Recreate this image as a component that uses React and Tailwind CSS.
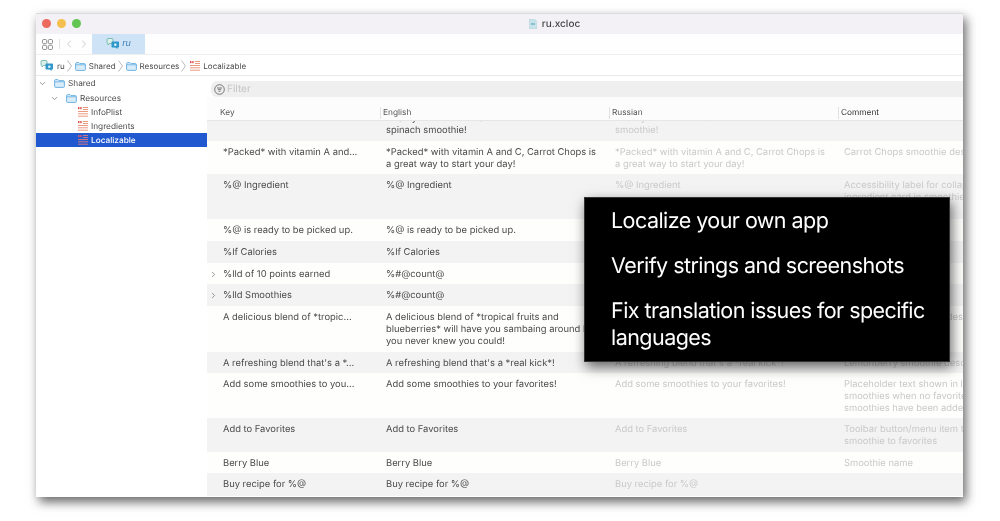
import React from 'react';
import { ChevronDown, ChevronRight, ChevronLeft } from 'lucide-react';

const rows = [
    { h: 'h-[20px]', key: '', en: ['A tasty blend of fruit and', 'spinach smoothie!'], ru: ['A tasty blend of fruit and', 'smoothie!'], note: [''], clipped: true },
    { h: 'h-[33px]', key: '*Packed* with vitamin A and...', en: ['*Packed* with vitamin A and C, Carrot Chops is', 'a great way to start your day!'], ru: ['*Packed* with vitamin A and C, Carrot Chops is', 'a great way to start your day!'], note: ['Carrot Chops smoothie description'] },
    { h: 'h-[45px]', key: '%@ Ingredient', en: ['%@ Ingredient'], ru: ['%@ Ingredient'], note: ['Accessibility label for collapsed', 'ingredient card in smoothie maker'] },
    { h: 'h-[22px]', key: '%@ is ready to be picked up.', en: ['%@ is ready to be picked up.'], ru: ['%@ is ready to be picked up.'], note: ['Order status'] },
    { h: 'h-[22px]', key: '%lf Calories', en: ['%lf Calories'], ru: ['%lf Calories'], note: ['Nutrition label'] },
    { h: 'h-[21px]', key: '%lld of 10 points earned', en: ['%#@count@'], ru: ['%#@count@'], note: ['Points earned'], more: true },
    { h: 'h-[22px]', key: '%lld Smoothies', en: ['%#@count@'], ru: ['%#@count@'], note: ['Smoothie count'], more: true },
    { h: 'h-[46px]', key: 'A delicious blend of *tropic...', en: ['A delicious blend of *tropical fruits and', 'blueberries* will have you sambaing around like', 'you never knew you could!'], ru: ['A delicious blend of *tropical fruits'], note: ['Bananaberry smoothie description das'] },
    { h: 'h-[21px]', key: "A refreshing blend that's a *...", en: ["A refreshing blend that's a *real kick*!"], ru: ["A refreshing blend that's a *real kick*!"], note: ['Lemonberry smoothie description'] },
    { h: 'h-[45px]', key: 'Add some smoothies to you...', en: ['Add some smoothies to your favorites!'], ru: ['Add some smoothies to your favorites!'], note: ['Placeholder text shown in list of', 'smoothies when no favorite', 'smoothies have been added'] },
    { h: 'h-[34px]', key: 'Add to Favorites', en: ['Add to Favorites'], ru: ['Add to Favorites'], note: ['Toolbar button/menu item to add', 'smoothie to favorites'] },
    { h: 'h-[21px]', key: 'Berry Blue', en: ['Berry Blue'], ru: ['Berry Blue'], note: ['Smoothie name'] },
    { h: 'h-[23px]', key: 'Buy recipe for %@', en: ['Buy recipe for %@'], ru: ['Buy recipe for %@'], note: [''] }
];

const Lines = ({ items, clipped }) => (
    <div className={clipped ? '-mt-[14px]' : ''}>
        {items.map((line, i) => <div key={i} className="whitespace-nowrap">{line}</div>)}
    </div>
);

const Folder = () => (
    <svg width="11" height="9" viewBox="0 0 11 9" fill="none" className="shrink-0">
        <path d="M.6 1.6c0-.6.4-1 1-1h2.3l1 1h4.500c.6 0 1 .4 1 1v4.800c0 .6-.4 1-1 1H1.600c-.6 0-1-.4-1-1z" fill="#d8ecfa" stroke="#62ace0" strokeWidth=".9" />
        <path d="M.8 2.800h9.400" stroke="#62ace0" strokeWidth=".8" />
    </svg>
);

const Strings = ({ dim }) => (
    <svg width="10" height="10" viewBox="0 0 10 10" className="shrink-0">
        <g fill={dim ? '#d9576a' : '#e2574c'}>
            <rect x="0" y="0" width="1.500" height="2.200" />
            <rect x="2.200" y="0" width="1.500" height="2.200" />
        </g>
        <g stroke={dim ? '#c9788a' : '#eb9a80'} strokeWidth="1">
            <path d="M5 .5h5M5 2.500h5M0 4.500h10M0 6.800h10M0 9.200h10" />
        </g>
    </svg>
);

const Translate = () => (
    <svg width="14" height="12" viewBox="0 0 14 12" fill="none" className="shrink-0">
        <path d="M1 1.500c0-.6.4-1 1-1h4c.6 0 1 .4 1 1v3c0 .6-.4 1-1 1H3.500L2 7V5.500c-.6 0-1-.4-1-1z" fill="#dcefe9" stroke="#6fb5ac" strokeWidth=".9" />
        <path d="M5.500 4.500c0-.6.4-1 1-1h5.500c.6 0 1 .4 1 1v4c0 .6-.4 1-1 1h-.5V11L9.500 9.500h-3c-.6 0-1-.4-1-1z" fill="#2f97c9" />
        <rect x="8" y="5.500" width="2.600" height="2.400" rx=".8" fill="#d5eef8" />
    </svg>
);

const Crumb = () => (
    <svg width="5" height="12" viewBox="0 0 5 12" fill="none" className="shrink-0">
        <path d="M.5.5 4.500 6 .5 11.500" stroke="#aaaaaa" strokeWidth=".8" />
    </svg>
);

const GridIcon = () => (
    <svg width="11" height="11" viewBox="0 0 11 11" fill="none" stroke="#808080" strokeWidth=".9">
        <rect x=".5" y=".5" width="4.200" height="4.200" rx="1.200" />
        <rect x="6.300" y=".5" width="4.200" height="4.200" rx="1.200" />
        <rect x=".5" y="6.300" width="4.200" height="4.200" rx="1.200" />
        <rect x="6.300" y="6.300" width="4.200" height="4.200" rx="1.200" />
    </svg>
);

const Sidebar = () => (
    <div className="w-[171px] shrink-0 bg-white text-[8.250px] text-[#4a4a4a]">
        <div className="h-[15px] flex items-center pl-[2px]">
            <ChevronDown size={9} className="text-[#777] shrink-0" />
            <span className="ml-[7px]"><Folder /></span>
            <span className="ml-[3px]">Shared</span>
        </div>
        <div className="h-[14px] flex items-center pl-[14px]">
            <ChevronDown size={9} className="text-[#777] shrink-0" />
            <span className="ml-[7px]"><Folder /></span>
            <span className="ml-[3px]">Resources</span>
        </div>
        <div className="h-[14px] flex items-center pl-[42px] gap-[3px]"><Strings />InfoPlist</div>
        <div className="h-[14px] flex items-center pl-[42px] gap-[3px]"><Strings />Ingredients</div>
        <div className="h-[14px] flex items-center pl-[42px] gap-[3px] bg-[#2058cf] text-white font-medium"><Strings dim />Localizable</div>
    </div>
);

const Table = () => (
    <div className="flex-1 min-w-0 flex flex-col overflow-hidden">
        <div className="h-[21px] shrink-0 pl-1 pt-[5px] bg-white">
            <div className="h-[16px] bg-[#eeefee] rounded-l-md flex items-center pl-[3px] gap-[2px] text-[10px] text-[#c4c4c4]">
                <svg width="11" height="11" viewBox="0 0 11 11" fill="none" stroke="#555" strokeWidth=".8">
                    <circle cx="5.500" cy="5.500" r="4.800" />
                    <path d="M3 4h5M3.800 5.700h3.400M4.700 7.400h1.600" />
                </svg>
                Filter
            </div>
        </div>
        <div className="h-[24px] shrink-0 grid grid-cols-[173px_229px_229px_229px] bg-[#fcfcfc] border-b border-[#e6e6e6] text-[8.300px] text-[#555]">
            <div className="flex items-center pl-[13px] pt-[6px]">Key</div>
            <div className="flex items-center pl-[2px] mt-[10px] mb-[3px] border-l border-[#e2e2e2]">English</div>
            <div className="flex items-center pl-[2px] mt-[10px] mb-[3px] border-l border-[#e2e2e2]">Russian</div>
            <div className="flex items-center pl-[2px] mt-[10px] mb-[3px] border-l border-[#e2e2e2] text-[#333]">Comment</div>
        </div>
        {rows.map((row, i) => (
            <div key={i} className={`${row.h} ${i % 2 === 0 ? 'bg-[#f2f3f2]' : 'bg-[#fefefd]'} shrink-0 overflow-hidden grid grid-cols-[173px_229px_229px_229px] text-[9.400px] leading-[12px]`}>
                <div className="relative pl-[16px] pt-[6px] text-[#4a4a4a]">
                    {row.more && <ChevronRight size={9} className="absolute left-[2px] top-[7px] text-[#777]" />}
                    <Lines items={[row.key]} />
                </div>
                <div className="pl-[6px] pt-[6px] text-[#4a4a4a]"><Lines items={row.en} clipped={row.clipped} /></div>
                <div className="pl-[6px] pt-[6px] text-[#c9c9c9]"><Lines items={row.ru} clipped={row.clipped} /></div>
                <div className="pl-[6px] pt-[6px] text-[#c9c9c9]"><Lines items={row.note} /></div>
            </div>
        ))}
    </div>
);

export default function App() {
    return (
        <div className="min-h-[521px] bg-white pl-[36px] pt-[13px] font-['Inter',sans-serif] [text-rendering:geometricPrecision] overflow-hidden">
            <div className="relative w-[927px] h-[484px] bg-white flex flex-col shadow-[3px_5px_10px_rgba(0,0,0,0.6)] blur-[0.35px]">
                {/* title bar */}
                <div className="h-[21px] shrink-0 bg-[#f3f1f6] border-t border-[#dcdcdc] relative flex items-center justify-center pl-[110px] gap-[5px] text-[10px] font-medium text-[#444]">
                    <div className="absolute left-[6px] top-[5px] flex gap-[6px]">
                        <span className="w-[9px] h-[9px] rounded-full bg-[#ed6a5e]" />
                        <span className="w-[9px] h-[9px] rounded-full bg-[#f5bf4f]" />
                        <span className="w-[9px] h-[9px] rounded-full bg-[#62c554]" />
                    </div>
                    <svg width="8" height="10" viewBox="0 0 8 10">
                        <path d="M0 0h5.500L8 2.500V10H0z" fill="#c6e3ea" stroke="#b7cdd3" strokeWidth=".5" />
                        <path d="M2 5h4" stroke="#4d9bb5" />
                    </svg>
                    ru.xcloc
                </div>
                {/* toolbar */}
                <div className="h-[21px] shrink-0 flex items-center border-b border-[#efefef] bg-[#fefefe]">
                    <span className="ml-[6px]"><GridIcon /></span>
                    <span className="ml-[6px] w-px h-[10px] bg-[#e2e2e2]" />
                    <ChevronLeft size={12} strokeWidth={1} className="ml-[3px] text-[#999]" />
                    <ChevronRight size={12} strokeWidth={1} className="ml-[3px] text-[#999]" />
                    <div className="ml-[2px] w-[53px] h-full bg-[#cfe3f6] flex items-center justify-center gap-[2px] text-[9px] italic text-[#3d7fb8]">
                        <Translate />ru
                    </div>
                </div>
                {/* path bar */}
                <div className="h-[21px] shrink-0 flex items-center pl-[4px] pt-[2px] border-b border-[#e9e9e9] text-[8px] text-[#4a4a4a]">
                    <Translate />
                    <span className="ml-[3px]">ru</span>
                    <span className="ml-[2px]"><Crumb /></span>
                    <span className="ml-[3px]"><Folder /></span>
                    <span className="ml-[3px]">Shared</span>
                    <span className="ml-[2px]"><Crumb /></span>
                    <span className="ml-[3px]"><Folder /></span>
                    <span className="ml-[3px]">Resources</span>
                    <span className="ml-[2px]"><Crumb /></span>
                    <span className="ml-[4px]"><Strings /></span>
                    <span className="ml-[3px]">Localizable</span>
                </div>
                <div className="flex-1 min-h-0 flex">
                    <Sidebar />
                    <Table />
                </div>
                {/* caption over the window */}
                <div className="absolute left-[548px] top-[184px] w-[366px] h-[165px] bg-black border border-[#333] shadow-[2px_5px_12px_rgba(0,0,0,0.6)] pl-[26px] pt-[10px] flex flex-col gap-[18px] text-white text-[21.500px] leading-[27px] tracking-[-0.55px]">
                    <div>Localize your own app</div>
                    <div>Verify strings and screenshots</div>
                    <div>Fix translation issues for specific languages</div>
                </div>
            </div>
        </div>
    );
}
